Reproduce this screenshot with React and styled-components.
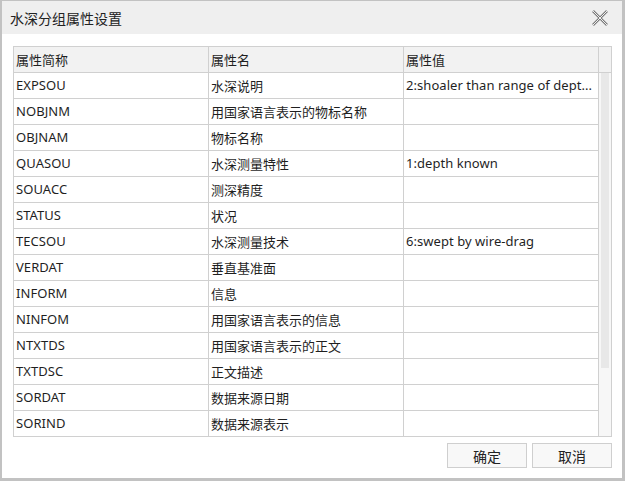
import React from "react";
import styled, { createGlobalStyle } from "styled-components";

const GlobalStyle = createGlobalStyle`
  html, body {
    margin: 0;
    padding: 0;
    background: #ffffff;
  }
  * {
    box-sizing: border-box;
  }
`;

const Window = styled.div`
  width: 625px;
  height: 481px;
  display: flex;
  flex-direction: column;
  background: #ffffff;
  border-style: solid;
  border-color: #c2c2c2;
  border-width: 1px 3px 3px 2px;
  font-family: "Noto Sans", "Noto Sans CJK SC", sans-serif;
  color: #1f1f1f;
`;

const TitleBar = styled.div`
  height: 33px;
  flex: none;
  display: flex;
  align-items: center;
  justify-content: space-between;
  padding: 0 14px 0 8px;
  background: #efefef;
`;

const Title = styled.span`
  font-size: 14px;
  font-family: "Noto Sans CJK SC", sans-serif;
  color: #222;
`;

const CloseButton = styled.div`
  width: 16px;
  height: 16px;
  display: flex;
  align-items: center;
  justify-content: center;
`;

const Body = styled.div`
  flex: 1;
  display: flex;
  flex-direction: column;
  padding: 12px 9px 0 11px;
`;

const Table = styled.div`
  width: 599px;
  border: 1px solid #d0d0d0;
  display: flex;
  flex-direction: column;
`;

const HeaderRow = styled.div`
  display: flex;
  height: 26px;
  background: #f2f2f2;
  border-bottom: 1px solid #d0d0d0;
`;

const Cell = styled.div`
  width: 195px;
  flex: none;
  display: block;
  height: 25px;
  line-height: 25px;
  padding: 0 2px 0 2px;
  border-right: 1px solid #d0d0d0;
  font-size: 13px;
  letter-spacing: ${(p) => (p.$cjk ? "0" : "0.05px")};
  white-space: nowrap;
  overflow: hidden;
  text-overflow: ellipsis;
  font-family: ${(p) =>
    p.$cjk ? '"Noto Sans CJK SC", sans-serif' : '"Noto Sans", "Noto Sans CJK SC", sans-serif'};
`;

const HeaderFiller = styled.div`
  flex: 1;
`;

const TableBody = styled.div`
  display: flex;
`;

const Rows = styled.div`
  width: 585px;
  display: flex;
  flex-direction: column;
`;

const Row = styled.div`
  display: flex;
  height: 26px;
  border-bottom: 1px solid #d0d0d0;
  &:last-child {
    height: 25px;
    border-bottom: none;
  }
`;

const ScrollTrack = styled.div`
  flex: 1;
  background: #f7f7f7;
  padding: 0 2px 0 2px;
`;

const ScrollThumb = styled.div`
  height: 295px;
  background: #e8e8e8;
`;

const Footer = styled.div`
  display: flex;
  justify-content: flex-end;
  gap: 5px;
  padding-top: 6px;
  width: 599px;
`;

const Button = styled.button`
  width: 80px;
  height: 25px;
  border: 1px solid #cfcfcf;
  background: #f8f8f8;
  font-family: "Noto Sans CJK SC", sans-serif;
  font-size: 14px;
  color: #222;
  padding: 0;
  display: flex;
  align-items: center;
  justify-content: center;
`;

const rows = [
  ["EXPSOU", "水深说明", "2:shoaler than range of dept..."],
  ["NOBJNM", "用国家语言表示的物标名称", ""],
  ["OBJNAM", "物标名称", ""],
  ["QUASOU", "水深测量特性", "1:depth known"],
  ["SOUACC", "测深精度", ""],
  ["STATUS", "状况", ""],
  ["TECSOU", "水深测量技术", "6:swept by wire-drag"],
  ["VERDAT", "垂直基准面", ""],
  ["INFORM", "信息", ""],
  ["NINFOM", "用国家语言表示的信息", ""],
  ["NTXTDS", "用国家语言表示的正文", ""],
  ["TXTDSC", "正文描述", ""],
  ["SORDAT", "数据来源日期", ""],
  ["SORIND", "数据来源表示", ""],
];

const CloseIcon = () => (
  <svg width="16" height="16" viewBox="0 0 16 16">
    <path d="M1 1 L15 15 M15 1 L1 15" stroke="#7a7a7a" strokeWidth="2.6" fill="none" />
    <path d="M1 1 L15 15 M15 1 L1 15" stroke="#efefef" strokeWidth="1" fill="none" />
  </svg>
);

const App = () => {
  return (
    <>
      <GlobalStyle />
      <Window>
        <TitleBar>
          <Title>水深分组属性设置</Title>
          <CloseButton>
            <CloseIcon />
          </CloseButton>
        </TitleBar>
        <Body>
          <Table>
            <HeaderRow>
              <Cell $cjk>属性简称</Cell>
              <Cell $cjk>属性名</Cell>
              <Cell $cjk>属性值</Cell>
              <HeaderFiller />
            </HeaderRow>
            <TableBody>
              <Rows>
                {rows.map(([code, name, value]) => (
                  <Row key={code}>
                    <Cell>{code}</Cell>
                    <Cell $cjk>{name}</Cell>
                    <Cell>{value}</Cell>
                  </Row>
                ))}
              </Rows>
              <ScrollTrack>
                <ScrollThumb />
              </ScrollTrack>
            </TableBody>
          </Table>
          <Footer>
            <Button>确定</Button>
            <Button>取消</Button>
          </Footer>
        </Body>
      </Window>
    </>
  );
};

export default App;
